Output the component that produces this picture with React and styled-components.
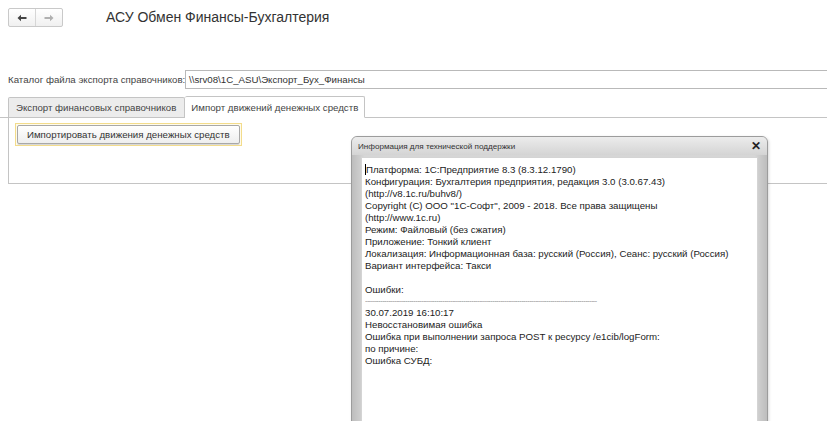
import React from 'react';
import styled, { createGlobalStyle } from 'styled-components';

const GlobalStyle = createGlobalStyle`
  html, body {
    margin: 0;
    padding: 0;
    background: #ffffff;
    font-family: Arial, "Liberation Sans", sans-serif;
    color: #333333;
  }
`;

const Page = styled.div`
  position: relative;
  width: 827px;
  height: 421px;
  overflow: hidden;
  background: #fff;
`;

const Header = styled.div`
  display: flex;
  align-items: center;
  padding: 8px 0 0 8px;
  height: 19px;
`;

const NavGroup = styled.div`
  display: flex;
  height: 17px;
  border: 1px solid #c9c9c9;
  border-radius: 2px;
  background: linear-gradient(#ffffff, #f0f0f0);
`;

const NavButton = styled.div`
  width: 26px;
  display: flex;
  align-items: center;
  justify-content: center;
  & + & {
    border-left: 1px solid #d6d6d6;
  }
`;

const Title = styled.div`
  margin-left: 43px;
  font-size: 14px;
  color: #333;
  line-height: 19px;
`;

const FieldRow = styled.div`
  display: flex;
  align-items: center;
  margin-top: 43px;
  padding-left: 8px;
  height: 19px;
`;

const Label = styled.div`
  font-size: 9.7px;
  color: #444;
  width: 177px;
  white-space: nowrap;
`;

const Input = styled.div`
  flex: 1;
  height: 17px;
  border: 1px solid #b9b9b9;
  border-right: none;
  font-size: 9.7px;
  line-height: 17px;
  padding-left: 3px;
  color: #333;
  white-space: nowrap;
`;

const TabBar = styled.div`
  display: flex;
  align-items: flex-end;
  margin-top: 8px;
  padding-left: 8px;
  height: 20px;
  border-bottom: 1px solid #c4c4c4;
`;

const Tab = styled.div`
  height: ${(p) => (p.$active ? '20px' : '19px')};
  margin-bottom: ${(p) => (p.$active ? '-1px' : '0')};
  padding: ${(p) => (p.$active ? '0 6px' : '0 8px 0 7px')};
  display: flex;
  align-items: center;
  font-size: 9.7px;
  color: #444;
  background: ${(p) => (p.$active ? '#ffffff' : '#ececec')};
  border: 1px solid #c4c4c4;
  border-bottom: ${(p) => (p.$active ? '1px solid #fff' : 'none')};
  border-left: ${(p) => (p.$active ? 'none' : '1px solid #c4c4c4')};
  border-radius: 2px 2px 0 0;
  white-space: nowrap;
`;

const Panel = styled.div`
  margin-left: 8px;
  height: 60px;
  border-left: 1px solid #c4c4c4;
  border-bottom: 1px solid #c4c4c4;
  padding: 5px 0 0 6px;
`;

const FocusRing = styled.div`
  display: inline-flex;
  padding: 1px;
  border: 1px solid #f3dc8c;
  background: #fffbea;
`;

const Button = styled.div`
  height: 17px;
  padding: 0 9px;
  display: flex;
  align-items: center;
  font-size: 9.7px;
  color: #333;
  border: 1px solid #a8a8a8;
  border-radius: 2px;
  background: linear-gradient(#ffffff, #eeeeee);
  box-shadow: 0 1px 0 #d8d8d8;
  white-space: nowrap;
`;

const Dialog = styled.div`
  position: absolute;
  left: 351px;
  top: 136px;
  width: 415px;
  height: 300px;
  border: 1px solid #9c9c9c;
  border-radius: 6px 6px 0 0;
  background: linear-gradient(90deg, #bdbdbd, #d6d6d6 3%, #d6d6d6 97%, #bdbdbd);
  box-shadow: 1px 1px 3px rgba(0, 0, 0, 0.15);
  display: flex;
  flex-direction: column;
`;

const DialogTitle = styled.div`
  height: 18px;
  display: flex;
  align-items: center;
  justify-content: space-between;
  padding: 0 6px 0 6px;
  font-size: 8.1px;
  color: #333;
  border-radius: 5px 5px 0 0;
  background: linear-gradient(#ececec, #d4d4d4);
`;

const Close = styled.span`
  font-size: 12px;
  font-weight: bold;
  color: #222;
  line-height: 12px;
`;

const DialogBody = styled.div`
  flex: 1;
  margin: 2px 9px 0 9px;
  background: #fff;
  border: 1px solid #d4d4d4;
  padding: 6px 3px;
  font-size: 9.7px;
  line-height: 11.95px;
  color: #222;
  white-space: pre;
  position: relative;
`;

const Caret = styled.span`
  display: inline-block;
  width: 1px;
  height: 11px;
  background: #000;
  vertical-align: -2px;
`;

const Dashes = styled.div`
  width: 237px;
  color: #8a8a8a;
  font-size: 7px;
  letter-spacing: -0.4px;
  height: 11.95px;
  line-height: 11.95px;
  overflow: hidden;
`;

const ArrowLeft = ({ color }) => (
  <svg width="10" height="8" viewBox="0 0 10 8">
    <path d="M0.5 4 L4 0.8 L4 3 L9.5 3 L9.5 5 L4 5 L4 7.2 Z" fill={color} />
  </svg>
);

const ArrowRight = ({ color }) => (
  <svg width="10" height="8" viewBox="0 0 10 8">
    <path d="M9.5 4 L6 0.8 L6 3 L0.5 3 L0.5 5 L6 5 L6 7.2 Z" fill={color} />
  </svg>
);

const linesTop = [
  'Конфигурация: Бухгалтерия предприятия, редакция 3.0 (3.0.67.43)',
  '(http://v8.1c.ru/buhv8/)',
  'Copyright (C) ООО "1С-Софт", 2009 - 2018. Все права защищены',
  '(http://www.1c.ru)',
  'Режим: Файловый (без сжатия)',
  'Приложение: Тонкий клиент',
  'Локализация: Информационная база: русский (Россия), Сеанс: русский (Россия)',
  'Вариант интерфейса: Такси',
  ' ',
  'Ошибки:',
];

const linesBottom = [
  '30.07.2019 16:10:17',
  'Невосстановимая ошибка',
  'Ошибка при выполнении запроса POST к ресурсу /e1cib/logForm:',
  'по причине:',
  'Ошибка СУБД:',
];

export default function App() {
  return (
    <>
      <GlobalStyle />
      <Page>
        <Header>
          <NavGroup>
            <NavButton>
              <ArrowLeft color="#444" />
            </NavButton>
            <NavButton>
              <ArrowRight color="#b0b0b0" />
            </NavButton>
          </NavGroup>
          <Title>АСУ Обмен Финансы-Бухгалтерия</Title>
        </Header>

        <FieldRow>
          <Label>Каталог файла экспорта справочников:</Label>
          <Input>\\srv08\1C_ASU\Экспорт_Бух_Финансы</Input>
        </FieldRow>

        <TabBar>
          <Tab>Экспорт финансовых справочников</Tab>
          <Tab $active>Импорт движений денежных средств</Tab>
        </TabBar>
        <Panel>
          <FocusRing>
            <Button>Импортировать движения денежных средств</Button>
          </FocusRing>
        </Panel>

        <Dialog>
          <DialogTitle>
            <span>Информация для технической поддержки</span>
            <Close>✕</Close>
          </DialogTitle>
          <DialogBody>
            <div>
              <Caret />
              Платформа: 1С:Предприятие 8.3 (8.3.12.1790)
            </div>
            {linesTop.map((l, i) => (
              <div key={i}>{l}</div>
            ))}
            <Dashes>{'-'.repeat(120)}</Dashes>
            {linesBottom.map((l, i) => (
              <div key={i}>{l}</div>
            ))}
          </DialogBody>
        </Dialog>
      </Page>
    </>
  );
}
